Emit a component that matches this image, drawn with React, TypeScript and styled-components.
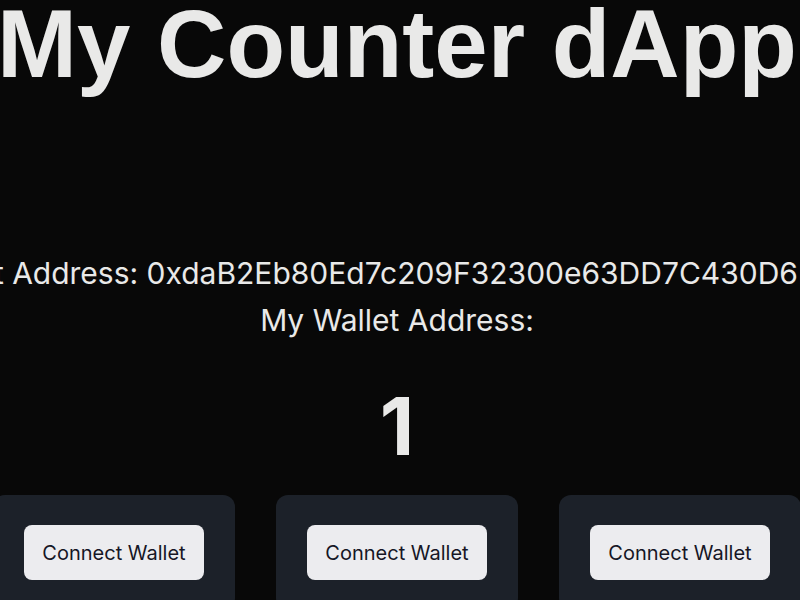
import React from "react";
import styled, { createGlobalStyle } from "styled-components";

const GlobalStyle = createGlobalStyle`
  html, body {
    margin: 0;
    padding: 0;
    background: #080808;
    overflow: hidden;
  }
`;

const Page = styled.main`
  width: 800px;
  height: 600px;
  box-sizing: border-box;
  padding-right: 6px;
  display: flex;
  flex-direction: column;
  align-items: center;
  overflow: hidden;
  background: #080808;
  color: #e9e9e8;
  font-family: Inter, "Noto Sans", sans-serif;
`;

const Title = styled.h1`
  margin: -4px 0 0;
  font-family: "Liberation Sans", Arial, sans-serif;
  font-weight: 700;
  font-size: 96px;
  line-height: 96px;
  white-space: nowrap;
  flex-shrink: 0;
`;

const Info = styled.section`
  margin-top: 158px;
  display: flex;
  flex-direction: column;
  align-items: center;
  flex-shrink: 0;
`;

const InfoLine = styled.p`
  margin: 0;
  font-size: 30px;
  line-height: 47px;
  white-space: nowrap;
`;

const Counter = styled.div`
  margin-top: 42px;
  font-size: 80px;
  font-weight: 700;
  line-height: 80px;
  flex-shrink: 0;
`;

const CardRow = styled.div`
  margin-top: 29px;
  display: flex;
  gap: 41px;
  flex-shrink: 0;
`;

const Card = styled.div`
  width: 242px;
  box-sizing: border-box;
  padding: 30px 31px;
  background: #1c2129;
  border-radius: 12px;
  display: flex;
  justify-content: center;
  flex-shrink: 0;
`;

const Button = styled.button`
  width: 180px;
  height: 55px;
  border: none;
  border-radius: 8px;
  background: #ececef;
  color: #161625;
  font-family: Inter, "Noto Sans", sans-serif;
  font-size: 20px;
  cursor: pointer;
`;

export default function App() {
  return (
    <>
      <GlobalStyle />
      <Page>
        <Title>My Counter dApp</Title>
        <Info>
          <InfoLine>Contract Address: 0xdaB2Eb80Ed7c209F32300e63DD7C430D6B1a4e2f</InfoLine>
          <InfoLine>My Wallet Address:</InfoLine>
        </Info>
        <Counter>1</Counter>
        <CardRow>
          {[0, 1, 2].map((i) => (
            <Card key={i}>
              <Button>Connect Wallet</Button>
            </Card>
          ))}
        </CardRow>
      </Page>
    </>
  );
}
